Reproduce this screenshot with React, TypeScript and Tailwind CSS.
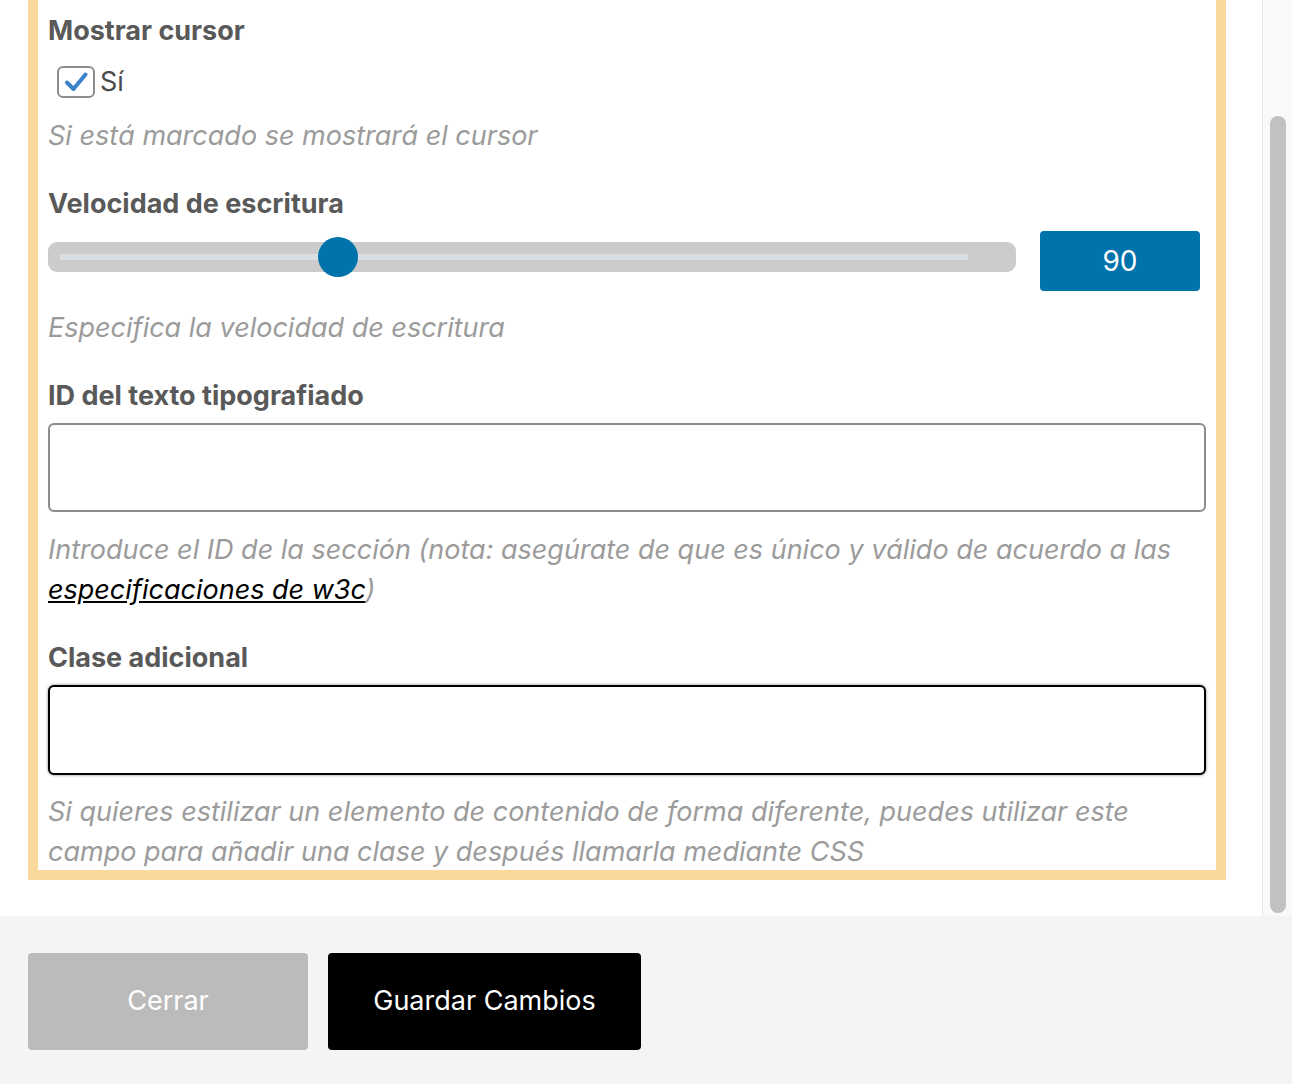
const font = { fontFamily: 'Inter, "Noto Sans", sans-serif' };

const Label = ({ children, className = '' }: { children: React.ReactNode; className?: string }) => (
    <div className={`text-[27px] leading-[40px] font-bold text-[#595959] ${className}`}>{children}</div>
);

const Help = ({ children, className = '' }: { children: React.ReactNode; className?: string }) => (
    <p className={`text-[27px] leading-[40px] italic text-[#9b9b9b] ${className}`}>{children}</p>
);

const App = () => {
    const speed = 90;
    const pct = 0.3;

    return (
        <div className="w-[1292px] h-[1084px] flex flex-col bg-white overflow-hidden" style={font}>
            <div className="h-[916px] flex">
                {/* Scroll content */}
                <div className="flex-1 pl-[28px] pr-[36px]">
                    <div className="border-x-[10px] border-b-[10px] border-[#fbd99d] px-[10px] pt-[11px] h-[880px]">
                        <Label>Mostrar cursor</Label>

                        <label className="mt-[11px] h-[40px] flex items-center pl-[9px] gap-[5px]">
                            <span className="w-[38px] h-[32px] rounded-[6px] border-2 border-[#8d8d8d] bg-white flex items-center justify-center">
                                <svg width="24" height="22" viewBox="0 0 24 22" fill="none">
                                    <path d="M3 11.5 L9.5 18 L21.5 3.5" stroke="#3a82c9" strokeWidth="4" strokeLinecap="round" strokeLinejoin="round" />
                                </svg>
                            </span>
                            <span className="text-[27px] text-[#4a4a4a]">Sí</span>
                        </label>

                        <Help className="mt-[14px]">Si está marcado se mostrará el cursor</Help>

                        <Label className="mt-[28px]">Velocidad de escritura</Label>

                        <div className="mt-[7px] flex items-start gap-[24px]">
                            <div className="flex-1 mt-[11px] h-[30px] rounded-[9px] bg-[#cccccc] relative flex items-center px-[12px] pr-[48px]">
                                <div className="h-[6px] w-full bg-[#d8dee1]" />
                                <div
                                    className="absolute top-1/2 -translate-y-1/2 -translate-x-1/2 w-[40px] h-[40px] rounded-full bg-[#0073aa]"
                                    style={{ left: `${pct * 100}%` }}
                                />
                            </div>
                            <div className="w-[160px] h-[60px] rounded-[4px] bg-[#0073aa] text-white text-[28px] flex items-center justify-center mr-[6px]">
                                {speed}
                            </div>
                        </div>

                        <Help className="mt-[17px]">Especifica la velocidad de escritura</Help>

                        <Label className="mt-[28px]">ID del texto tipografiado</Label>
                        <input className="mt-[7px] block w-full h-[89px] rounded-[6px] border-2 border-[#8c8c8c] bg-white outline-none" />
                        <Help className="mt-[18px]">
                            Introduce el ID de la sección (nota: asegúrate de que es único y válido de acuerdo a las{' '}
                            <a className="text-black underline">especificaciones de w3c</a>)
                        </Help>

                        <Label className="mt-[28px]">Clase adicional</Label>
                        <input className="mt-[7px] block w-full h-[90px] rounded-[6px] border-2 border-black bg-white outline-none shadow-[0_0_3px_rgba(0,0,0,0.5)]" />
                        <Help className="mt-[17px]">
                            Si quieres estilizar un elemento de contenido de forma diferente, puedes utilizar este campo para añadir una clase y después llamarla mediante CSS
                        </Help>
                    </div>
                </div>

                {/* Scrollbar */}
                <div className="w-[30px] border-l border-[#e8e8e8] bg-[#f9f9f9] flex flex-col items-center pt-[116px] pb-[3px]">
                    <div className="w-[16px] flex-1 rounded-full bg-[#c1c1c1]" />
                </div>
            </div>

            {/* Footer */}
            <div className="flex-1 bg-[#f4f4f4] px-[28px] pt-[37px] flex items-start gap-[20px]">
                <button className="w-[280px] h-[97px] rounded-[4px] bg-[#bbbbbb] text-white text-[27px]">Cerrar</button>
                <button className="w-[313px] h-[97px] rounded-[4px] bg-black text-white text-[27px]">Guardar Cambios</button>
            </div>
        </div>
    );
};

export default App;
